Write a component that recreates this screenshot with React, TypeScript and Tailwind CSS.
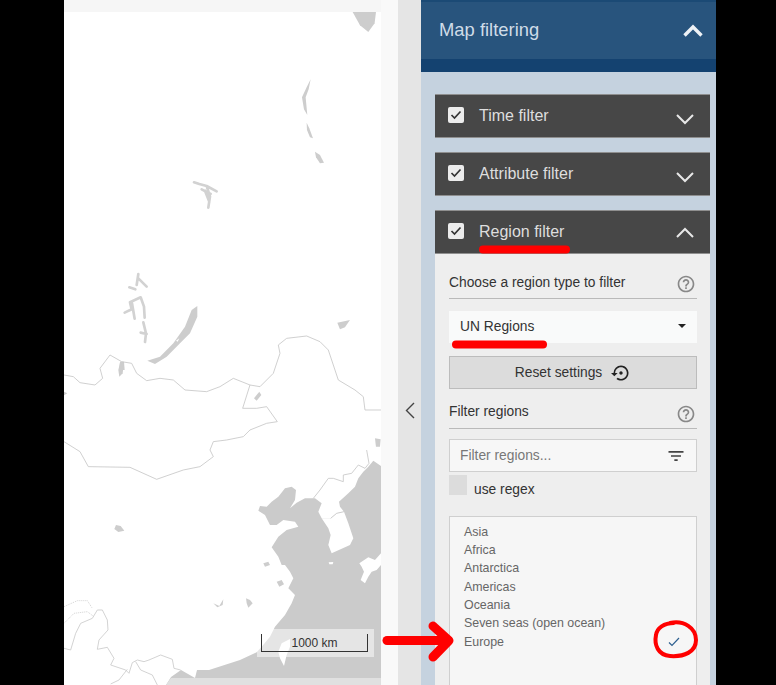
import React from 'react';
import { MdFilterList, MdHelpOutline, MdSettingsBackupRestore } from 'react-icons/md';

const REGIONS = ['Asia', 'Africa', 'Antarctica', 'Americas', 'Oceania', 'Seven seas (open ocean)', 'Europe'];

const Chevron: React.FC<{ up?: boolean }> = ({ up }) => (
    <svg width="18" height="11" viewBox="0 0 18 11" fill="none" stroke="#e8e8e8" strokeWidth="2">
        <path d={up ? 'M1 10 L9 2 L17 10' : 'M1 1 L9 9 L17 1'} />
    </svg>
);

const FilterHeader: React.FC<{ label: string; open?: boolean }> = ({ label, open }) => (
    <div className="flex h-[44px] items-center border-y border-[#8f8f8f] bg-[#474747] pl-[13px] pr-[16px] text-[16px] text-[#dedede]">
        <span className="mb-[3px] flex h-4 w-4 items-center justify-center rounded-[2px] bg-[#ececec]">
            <svg width="12" height="10" viewBox="0 0 12 10" fill="none" stroke="#333" strokeWidth="1.7">
                <path d="M1.5 5 L4.5 8 L10.5 1.5" />
            </svg>
        </span>
        <span className="ml-[15px] flex-1">{label}</span>
        <span className={open ? 'mb-[-1px]' : 'mt-[6px]'}>
            <Chevron up={open} />
        </span>
    </div>
);

const SectionTitle: React.FC<{ label: string; raised?: boolean }> = ({ label, raised }) => (
    <div className="flex items-start justify-between border-b border-[#b9b9b9] text-[13.8px] text-[#333]">
        <span className="mt-[1px] leading-[20px]">{label}</span>
        <MdHelpOutline
            size={20}
            className={raised ? 'mt-[2px] mb-[4px] mr-[1px] text-[#888]' : 'mt-[3px] mb-[4px] mr-[1px] text-[#888]'}
        />
    </div>
);

const MapDrawing: React.FC = () => (
    <svg width="317" height="673" viewBox="64 12 317 673" className="block bg-white blur-[0.4px]">
        {/* top right islands */}
        <g transform="translate(60 0) scale(0.3333)" fill="#cdcdcd">
            <path d="M878 36 L948 36 L944 70 L925 96 L900 76 Z" />
            <path d="M752 238 L746 268 L737 292 L742 345 L732 328 L726 292 L740 262 Z" />
            <path d="M740 368 L748 385 L759 415 L750 412 L741 390 Z" />
            <path d="M765 455 L780 465 L792 488 L780 490 L768 472 Z" />
            <path d="M832 968 L870 960 L855 982 L840 988 Z" />
        </g>

        {/* siberian lakes */}
        <g transform="translate(110 170) scale(0.3333)">
            <path fill="#cdcdcd" d="M112 572 L150 560 L190 520 L225 470 L245 420 L262 408 L262 440 L240 490 L210 520 L170 560 L135 582 Z" />
            <path fill="#fff" d="M198 512 L208 505 L203 515 Z" />
            <path fill="#cdcdcd" d="M30 575 L42 575 L44 600 L28 600 Z" />
            <g fill="none" stroke="#d2d2d2" strokeWidth="8" strokeLinecap="round" strokeLinejoin="round">
                <path d="M252 37 L268 42 L290 48 L320 64 M290 48 L300 80 L295 113 M275 58 L302 72 M285 62 L298 95" />
                <path d="M85 312 L80 345 M85 325 L110 350 M58 352 L76 358" />
                <path d="M44 428 L65 418 L60 397 L92 382 L102 410 L104 443 M66 400 L74 446" />
                <path d="M100 457 L108 490 L105 516 M92 488 L110 492" />
            </g>
        </g>

        {/* mongolia and russia borders */}
        <g transform="translate(60 330) scale(0.3333)">
            <g fill="#cdcdcd">
                <path d="M180 98 L192 98 L188 130 L178 140 L175 120 Z" />
                <path d="M598 185 L604 195 L590 212 L582 205 Z" />
                <path d="M945 325 L962 328 L960 350 L948 350 Z" />
                <path d="M12 185 L22 190 L12 196 Z" />
                <path d="M168 585 L182 588 L193 602 L175 606 L163 597 Z" />
                <path d="M460 820 L478 828 L490 808 L488 825 L472 832 Z" />
            </g>
            <g fill="none" stroke="#c4c4c4" strokeWidth="2.4">
                <path d="M12 135 L40 140 L60 158 L105 165 L128 145 L120 115 L150 75 L185 95 L215 100 L230 130 L260 152 L300 145 L340 150 L375 180 L440 185 L480 170 L520 145 L570 165 L600 170 L640 130 L660 70 L655 45 L680 25 L740 18 L780 35 L805 60 L835 150 L885 180 L910 200 L915 240 L963 240" />
                <path d="M570 165 L548 235 L590 235 L620 230 L652 275 L620 280 L570 300 L550 320 L500 330 L460 335 L450 360 L460 380 L420 410 L370 420 L290 448 L210 412 L85 410 L60 365 L12 335" />
            </g>
        </g>

        {/* china coast, yellow sea, korea, japan */}
        <g transform="translate(240 450) scale(0.3333)">
            <path
                fill="#cbcbcb"
                d="M423 48 L400 32 L385 50 L370 65 L355 85 L345 110 L325 130 L297 155 L300 170 L312 185 L290 190 L272 205 L245 205 L235 185 L245 160 L225 145 L195 145 L170 158 L150 175 L165 150 L168 120 L155 110 L135 115 L115 140 L95 155 L80 170 L60 168 L55 182 L75 195 L90 225 L110 225 L130 210 L165 215 L175 230 L140 240 L115 260 L95 292 L115 320 L125 345 L135 345 L150 365 L160 385 L145 415 L165 435 L155 460 L135 495 L105 530 L90 560 L65 590 L50 607 L0 630 L-93 660 L-129 660 L-135 684 L-177 660 L-207 681 L-222 705 L423 705 Z"
            />
            <path fill="#e0e0e0" d="M-207 684 L423 684 L423 705 L-222 705 Z" />
            <path fill="#fff" d="M272 205 L290 190 L312 185 L325 220 L340 265 L330 285 L275 310 L265 285 L272 255 L265 235 L245 205 Z" />
            <path fill="#fff" d="M358 340 L385 322 L405 330 L423 310 L423 345 L410 360 L395 365 L385 380 L375 400 L362 390 L372 365 L365 350 Z" />
            <path fill="#fff" d="M125 580 L150 567 L150 590 L140 615 L132 648 L120 625 L115 605 Z" />
            <path fill="#fff" d="M266 337 L280 336 L278 343 L268 343 Z" />
            <g fill="#cdcdcd">
                <path d="M110 395 L125 390 L132 403 L118 410 Z" />
                <path d="M18 445 L30 450 L38 460 L25 473 L20 460 Z" />
                <path d="M70 340 L85 335 L90 345 L75 350 Z" />
            </g>
            <g fill="none" stroke="#c4c4c4" strokeWidth="2.4">
                <path d="M220 145 L240 120 L265 85 L280 85 L310 95 L310 75 L335 70 L355 45 L375 55 L387 40 L380 0" />
                <path d="M272 205 L290 190 L312 185" />
            </g>
        </g>

        {/* south west borders */}
        <g transform="translate(64 590) scale(0.3333)" fill="none" stroke="#c8c8c8" strokeWidth="2.4">
            <path d="M0 175 L20 180 L35 130 L50 100 L85 85 L100 60 L115 60 L130 90 L132 120 L105 150 L100 178 L130 172 L150 205 L140 225 L185 240 L195 250 L205 218 L220 210 L240 215 L255 210 L290 195 L325 208 L330 235 L350 240" />
            <path d="M190 238 L165 270 L140 282 M215 215 L230 240 L265 255 L280 285" />
            <path d="M0 50 L40 32 L70 32 L85 55 M0 100 L30 70 L70 65 L90 80" strokeDasharray="3 3" />
        </g>
    </svg>
);

const App: React.FC = () => {
    return (
        <div className="relative flex h-[685px] w-[776px] overflow-hidden bg-black font-['Liberation_Sans',sans-serif]">
            <div className="w-[64px] shrink-0" />

            {/* map */}
            <div className="relative w-[317px] shrink-0 bg-[#f6f6f6] pt-3">
                <MapDrawing />
                <div className="absolute left-[193px] top-[629px] h-[28px] w-[117px] bg-white/50 pl-[4px] pr-[6px] pt-[5px]">
                    <div className="h-[18px] border-x border-b border-[#333] text-center text-[12px] leading-[18px] text-[#333]">
                        1000 km
                    </div>
                </div>
            </div>

            <div className="w-[17px] shrink-0 bg-[#f9f9f9]" />

            {/* collapse handle */}
            <div className="flex w-[23px] shrink-0 justify-center bg-[#e5e5e5] pt-[402px]">
                <svg width="10" height="17" viewBox="0 0 10 17" fill="none" stroke="#444" strokeWidth="1.4">
                    <path d="M9 1 L1.5 8.5 L9 16" />
                </svg>
            </div>

            {/* side panel */}
            <div className="flex w-[295px] shrink-0 flex-col bg-[#c5d2df]">
                <div className="h-[72px] shrink-0 border-t-[2px] border-b-[13px] border-t-[#1b4a75] border-b-[#144270] bg-[#28547d]">
                    <div className="flex h-[57px] items-center justify-between pl-[18px] pr-[13px] text-[18.4px] text-[#cfdce8]">
                        <span className="mb-[2px]">Map filtering</span>
                        <svg width="20" height="13" viewBox="0 0 20 13" fill="none" stroke="#eef2f6" strokeWidth="3.4">
                            <path d="M1.5 11.5 L10 3 L18.5 11.5" />
                        </svg>
                    </div>
                </div>

                <div className="ml-[14px] mr-[6px] mt-[22px] flex flex-1 flex-col">
                    <FilterHeader label="Time filter" />
                    <div className="mt-[14px]">
                        <FilterHeader label="Attribute filter" />
                    </div>
                    <div className="mt-[14px]">
                        <FilterHeader label="Region filter" open />
                    </div>

                    <div className="flex-1 overflow-hidden bg-[#eeeeee] pl-[14px] pr-[13px] pt-[18px]">
                        <SectionTitle label="Choose a region type to filter" raised />

                        <div className="mt-[12px] flex h-[32px] items-center justify-between bg-[#f9fafa] pl-[11px] pr-[11px] text-[13.8px] text-[#333]">
                            <span>UN Regions</span>
                            <span className="mb-[2px] h-0 w-0 border-x-[4px] border-t-[4px] border-x-transparent border-t-[#222]" />
                        </div>

                        <button className="mt-[13px] flex h-[33px] w-full items-center justify-center border border-[#bcbcbc] bg-[#dcdcdc] text-[13.8px] text-[#333]">
                            <span className="mt-[1px]">Reset settings</span>
                            <MdSettingsBackupRestore size={20} className="ml-[9px] text-[#222]" />
                        </button>

                        <div className="mt-[12px]">
                            <SectionTitle label="Filter regions" />
                        </div>

                        <div className="mt-[10px] flex h-[33px] items-center justify-between border border-[#cfcfcf] bg-[#f7f7f7] pl-[10px] pr-[10px] text-[13.8px] text-[#777]">
                            <span className="mt-[1px]">Filter regions...</span>
                            <MdFilterList size={20} className="text-[#444]" />
                        </div>

                        <div className="mt-[3px] flex h-[21px] text-[13.8px] text-[#333]">
                            <span className="h-[20px] w-[18px] bg-[#dcdcdc]" />
                            <span className="ml-[7px] mt-[5px] leading-[20px]">use regex</span>
                        </div>

                        <div className="mt-[20px] h-[200px] border border-[#cfcfcf] bg-[#f6f6f6] pl-[14px] pr-[14px] pt-[5.5px] text-[12.4px] text-[#666]">
                            {REGIONS.map(region => (
                                <div key={region} className="flex h-[18.35px] items-center justify-between leading-[18px]">
                                    <span>{region}</span>
                                    {region === 'Europe' && (
                                        <svg width="12" height="10" viewBox="0 0 12 10" fill="none" stroke="#2d5f8f" strokeWidth="1.2" className="mr-[2px]">
                                            <path d="M1 5.5 L4 8.5 L11 1" />
                                        </svg>
                                    )}
                                </div>
                            ))}
                        </div>
                    </div>
                </div>
            </div>

            <div className="flex-1" />

            {/* red annotations drawn on top of the screenshot */}
            <svg width="776" height="685" viewBox="0 0 776 685" fill="none" stroke="#ff0000" className="pointer-events-none absolute left-0 top-0">
                <path d="M483 249.5 L566 249.5" strokeWidth="8" strokeLinecap="round" />
                <path d="M456 344.5 L543 344.5" strokeWidth="8" strokeLinecap="round" />
                <path d="M387 640.5 L446 640.5" strokeWidth="9" strokeLinecap="round" />
                <path d="M433 626 L449 640.5 L433 657" strokeWidth="9" strokeLinecap="round" strokeLinejoin="round" />
                <path d="M670 623 C684 620 696 628 696 640 C696 652 684 657 670 656 C658 655 654 645 656 635 C657 628 664 623 674 623" strokeWidth="4" strokeLinecap="round" />
            </svg>
        </div>
    );
};

export default App;
